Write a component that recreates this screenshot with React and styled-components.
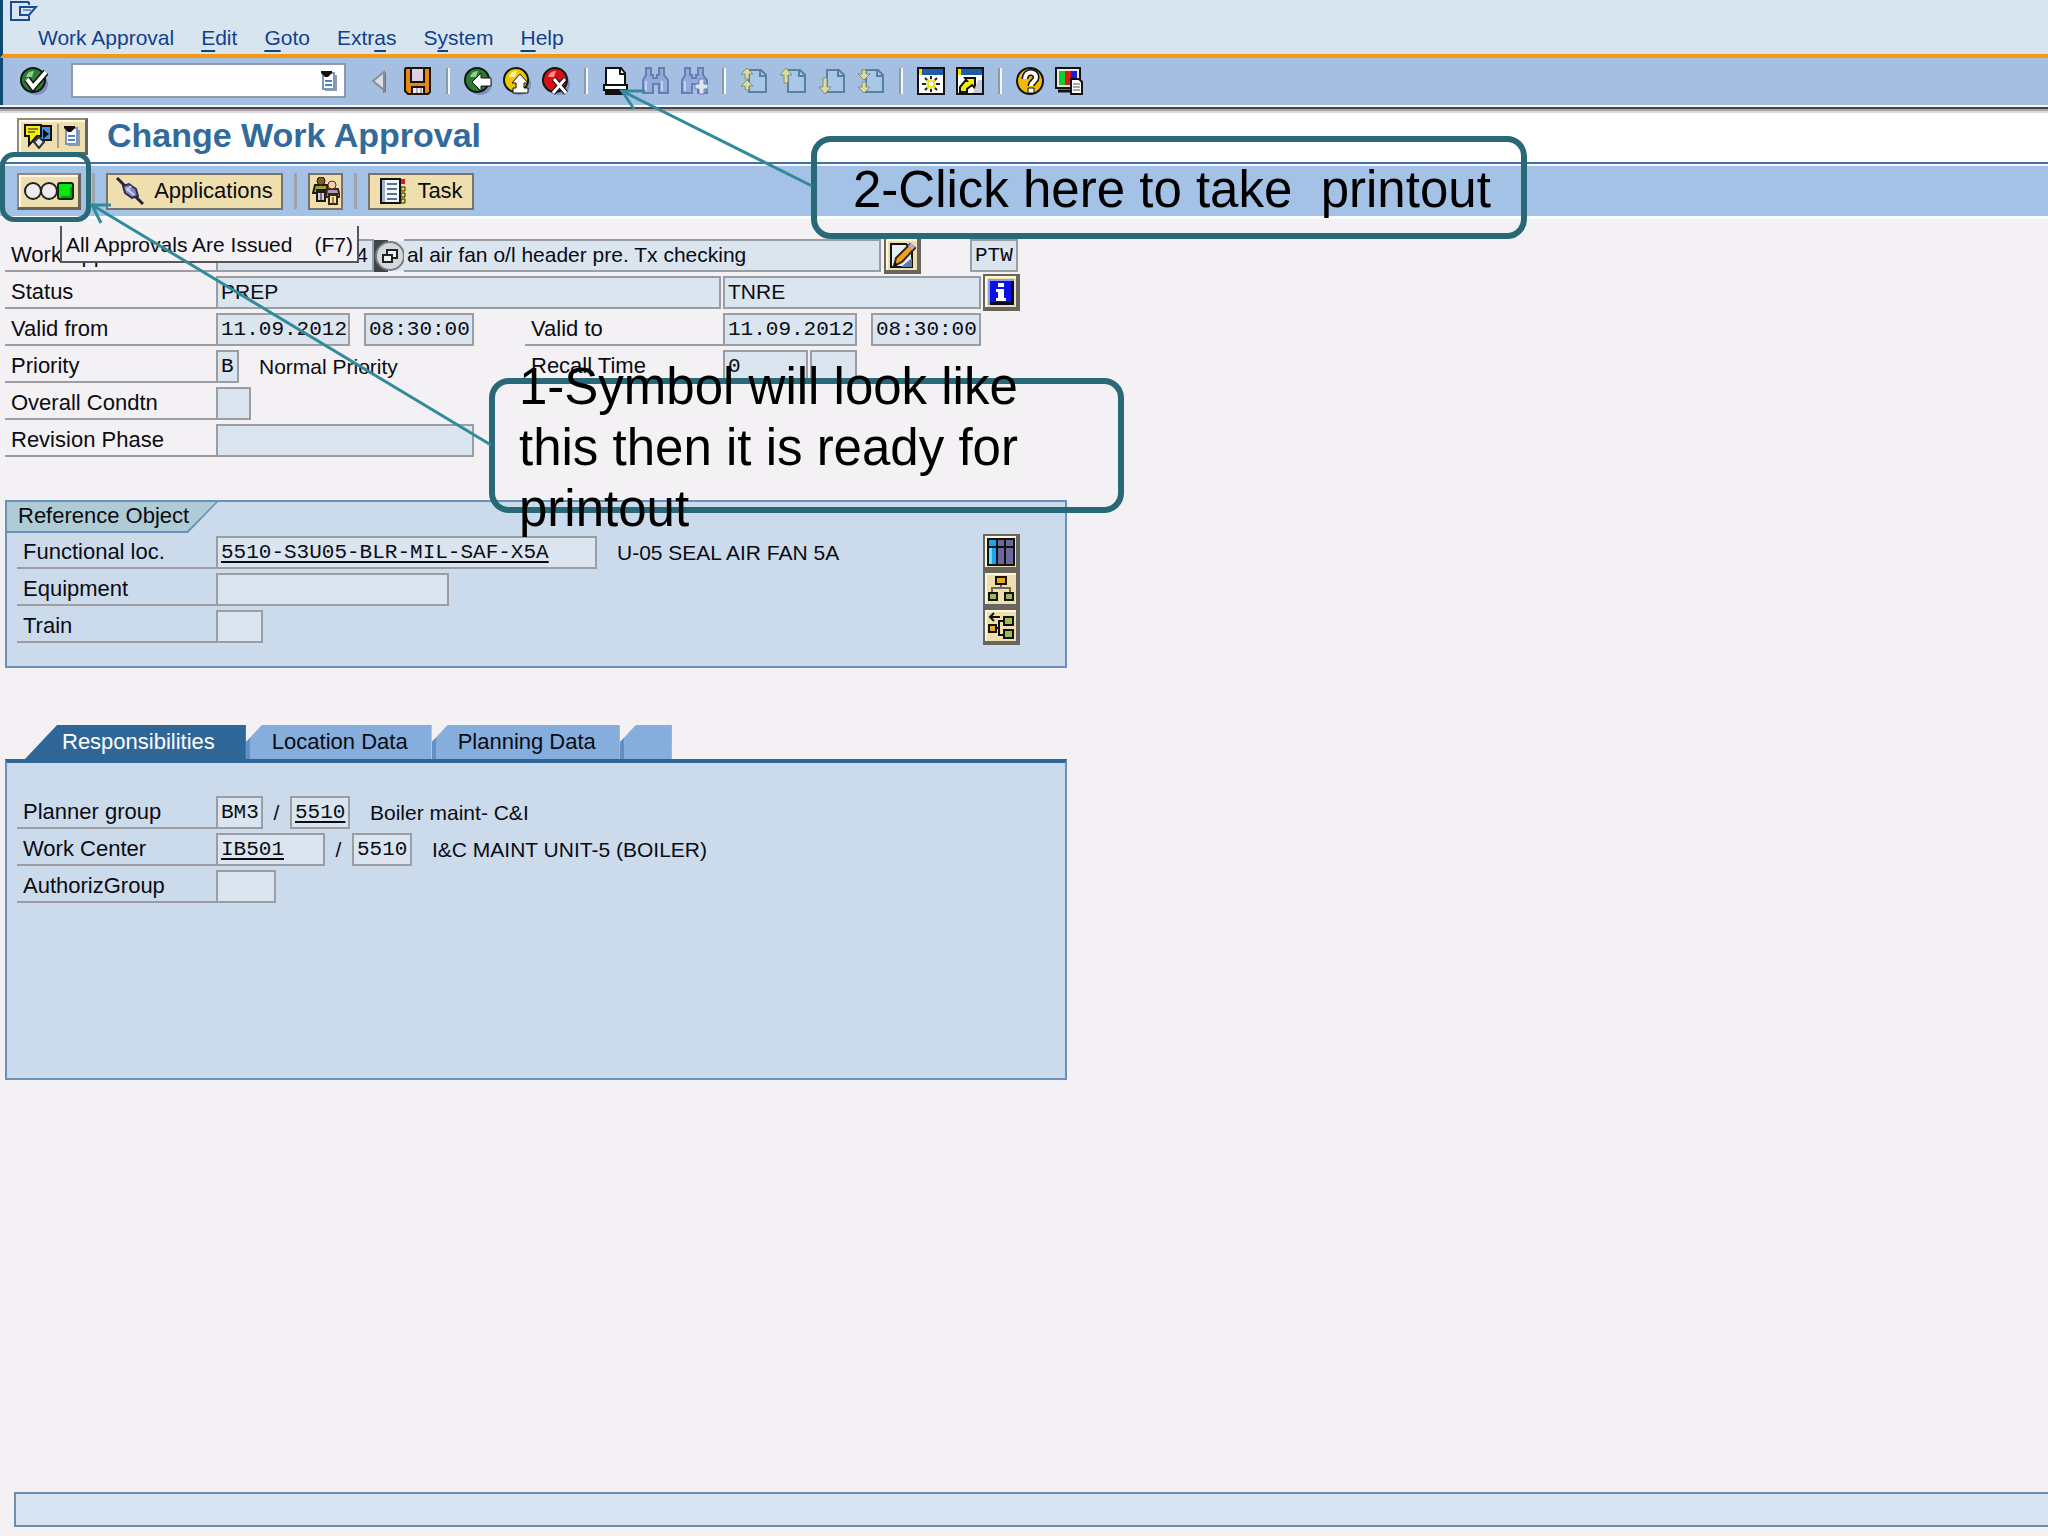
import React, { useState } from "react";
import styled, { createGlobalStyle, css } from "styled-components";

const sans = `"Liberation Sans", Arial, sans-serif`;
const mono = `"Liberation Mono", "Courier New", monospace`;

/* ---------- icons ---------- */

const Svg = ({ w = 28, h = 28, children }) => (
  <svg width={w} height={h} viewBox={`0 0 ${w} ${h}`} aria-hidden="true">
    {children}
  </svg>
);

const Ball = ({ fill, light, children }) => (
  <Svg>
    <ellipse cx="16" cy="17" rx="12" ry="11" fill="#7f8fc0" />
    <circle cx="13" cy="13" r="12" fill={fill} stroke="#0a1a10" strokeWidth="2" />
    <path d="M6 10a8 8 0 0 1 8-6l-2 6z" fill={light} />
    {children}
  </Svg>
);

const CheckIcon = () => (
  <Ball fill="#2c7a34" light="#8fcf8a">
    <path d="M7 12l6 8L26 5" fill="none" stroke="#111" strokeWidth="7" />
    <path d="M7 12l6 8L26 5" fill="none" stroke="#fff" strokeWidth="4" />
  </Ball>
);

const BackIcon = () => (
  <Ball fill="#2c7a34" light="#8fcf8a">
    <path d="M8 15l9-9v5h10v8H17v5z" fill="#fff" stroke="#111" strokeWidth="1" />
  </Ball>
);

const ExitIcon = () => (
  <Ball fill="#f2c500" light="#fff7a0">
    <path d="M17 7l8 9h-4v5h4v5H10v-5h3v-5H9z" fill="#fff" stroke="#111" strokeWidth="1" />
  </Ball>
);

const CancelIcon = () => (
  <Ball fill="#d90f16" light="#ff8f8f">
    <path d="M12 12l12 14M23 12L11 26" stroke="#111" strokeWidth="5" />
    <path d="M12 12l12 14M23 12L11 26" stroke="#fff" strokeWidth="3" />
  </Ball>
);

const ListIcon = () => (
  <Svg w={18} h={22}>
    <path d="M5 5h12v16H5z" fill="#8d9ab8" />
    <path d="M3 3h11v16H3z" fill="#fff" stroke="#7d94bd" strokeWidth="2" />
    <path d="M5 11h7M5 15h7" stroke="#4f7fc4" strokeWidth="2" />
    <path d="M1 1h11v2L8 7H5L1 3z" fill="#111" />
  </Svg>
);

const PrevIcon = () => (
  <Svg>
    <path d="M21 5v20l-3 1V8z" fill="#6f7684" />
    <path d="M19 5v18L8 14z" fill="#dedee2" stroke="#8a8d98" strokeWidth="2" />
  </Svg>
);

const SaveIcon = () => (
  <Svg>
    <path d="M2 1h24v24l-2 2H4l-3-3V2z" fill="#e08a14" stroke="#1b1206" strokeWidth="2" />
    <path d="M7 1h13v14H7z" fill="#dccfe6" stroke="#1b1206" strokeWidth="2" />
    <path d="M8 20h12v7H8z" fill="#f3eef5" stroke="#1b1206" strokeWidth="2" />
    <path d="M13 21v5M17 21v5" stroke="#b8a6bf" strokeWidth="2" />
  </Svg>
);

const PrintIcon = () => (
  <Svg>
    <path d="M4 1h15l4 5v12H4z" fill="#fff" stroke="#111" strokeWidth="2" />
    <path d="M18 1v6h6" fill="none" stroke="#111" strokeWidth="2" />
    <path d="M2 18h23v5H2z" fill="#fff" stroke="#111" strokeWidth="2" />
    <path d="M3 24h21v4H3z" fill="#111" />
  </Svg>
);

const FindIcon = ({ plus }) => (
  <Svg>
    <path
      d="M5 1h5v7h2v3h4V8h2V1h5v7l4 5v13h-9v-9h-6v9H2V13l3-5z"
      fill="#93aadb"
      stroke="#6380ae"
      strokeWidth="2"
    />
    <path d="M5 14v10M21 14v10" stroke="#c2d2f0" strokeWidth="2" />
    {plus && (
      <path
        d="M19 12h5v5h4v5h-4v5h-5v-5h-4v-5h4z"
        fill="#dfe6f2"
        stroke="#6380ae"
        strokeWidth="1"
      />
    )}
  </Svg>
);

const PageIcon = ({ children }) => (
  <Svg>
    <path d="M9 3h12l5 5v17H9z" fill="#a9c6e6" stroke="#57829f" strokeWidth="2" />
    <path d="M20 3v6h6" fill="none" stroke="#57829f" strokeWidth="2" />
    <g fill="#dedc9c" stroke="#7c9078" strokeWidth="1">
      {children}
    </g>
  </Svg>
);

const arrows = {
  first: <path d="M7 1l6 6H9v5H5V7H1zM7 13l6 6H9v4H5v-4H1z" />,
  up: <path d="M7 1l6 7H9v8H5V8H1z" />,
  down: <path d="M7 27l6-7H9v-9H5v9H1z" />,
  last: <path d="M7 13l6-6H9V3H5v4H1zM7 26l6-6H9v-5H5v5H1z" />,
};

const Win = ({ children }) => (
  <Svg>
    <path d="M1 1h26v26H1z" fill="#fff" stroke="#111" strokeWidth="2" />
    <path d="M2 2h24v6H2z" fill="#1d5ca8" />
    <path d="M2 2h3v6H2z" fill="#f3e600" />
    {children}
  </Svg>
);

const SessionIcon = () => (
  <Win>
    <path d="M14 9v16M5 17h18M8 11l12 12M20 11L8 23" stroke="#222" strokeWidth="2" />
    <path d="M14 12v10M9 17h10M10 13l8 8M18 13l-8 8" stroke="#f6ee00" strokeWidth="2" />
    <path d="M12 15h4v4h-4z" fill="#fff" />
  </Win>
);

const ShortcutIcon = () => (
  <Win>
    <path
      d="M4 25v-5l5-6h2l-2-3h10v10l-3-3-5 4v3z"
      fill="#f6ee00"
      stroke="#111"
      strokeWidth="2"
    />
    <path d="M22 13h4v13h-9z" fill="#c5cbdc" />
  </Win>
);

const HelpIcon = () => (
  <Svg>
    <circle cx="14" cy="14" r="13" fill="#f0b90a" stroke="#111" strokeWidth="2" />
    <path d="M5 9a11 11 0 0 1 7-6v7z" fill="#fff59a" />
    <path d="M9 12c0-9 12-8 11-1 0 3-5 4-5 8" fill="none" stroke="#111" strokeWidth="7" />
    <path d="M9 12c0-9 12-8 11-1 0 3-5 4-5 8" fill="none" stroke="#fff" strokeWidth="4" />
    <path d="M12 21h6v5h-6z" fill="#fff" stroke="#111" strokeWidth="1" />
  </Svg>
);

const LayoutIcon = () => (
  <Svg>
    <path d="M1 1h24v20H1z" fill="#e9e9e9" stroke="#111" strokeWidth="2" />
    <path d="M4 4h6v14H4z" fill="#0fce2c" />
    <path d="M10 4h6v14h-6z" fill="#e3121b" />
    <path d="M16 4h6v14h-6z" fill="#1a1ae0" />
    <path d="M3 24h14" stroke="#111" strokeWidth="3" />
    <path d="M16 12h8l3 3v12H16z" fill="#fff" stroke="#111" strokeWidth="2" />
    <path d="M18 17h7M18 20h7M18 23h7" stroke="#555" strokeWidth="1" />
  </Svg>
);

const ExitWindowIcon = () => (
  <Svg w={28} h={20}>
    <path d="M19 1H1v18h18v-4M19 1v3" fill="none" stroke="#1b4b96" strokeWidth="2" />
    <path d="M10 6h16l-7 8h-9z" fill="none" stroke="#1b4b96" strokeWidth="2" />
    <path d="M13 9h8" stroke="#1b4b96" strokeWidth="1" />
  </Svg>
);

const ServicesIcon = () => (
  <Svg w={30} h={26}>
    <path d="M17 3h11v14H17z" fill="#4b8fe0" stroke="#111" strokeWidth="2" />
    <path d="M20 6l6 5-6 5z" fill="#111" />
    <path d="M2 2h16v11h-4l-8 9v-9H2z" fill="#f7ee10" stroke="#111" strokeWidth="2" />
    <path d="M5 6h10M5 9h7" stroke="#111" strokeWidth="1" />
    <path d="M11 19l5-5 5 5-5 6z" fill="#dfe7f2" stroke="#333" strokeWidth="2" />
  </Svg>
);

const LightsIcon = () => (
  <Svg w={50} h={20}>
    <circle cx="9" cy="10" r="8" fill="#ececec" stroke="#222" strokeWidth="2" />
    <circle cx="25" cy="10" r="8" fill="#ececec" stroke="#222" strokeWidth="2" />
    <rect x="34" y="2" width="15" height="16" rx="2" fill="#08e510" stroke="#0c2a0c" strokeWidth="2" />
    <path d="M37 16h10V6" fill="none" stroke="#0a9a12" strokeWidth="2" />
  </Svg>
);

const PlugIcon = () => (
  <Svg>
    <path d="M1 1l26 26" stroke="#23233a" strokeWidth="3" />
    <path d="M7 9l6-2 7 5 2 7-6 2-7-5z" fill="#8287c2" stroke="#2b2b4c" strokeWidth="2" />
    <path d="M10 11l8 7M15 9l-4 5" stroke="#c9cdf0" strokeWidth="2" />
  </Svg>
);

const PeopleIcon = () => (
  <Svg>
    <path d="M5 15h8v9H5z" fill="#c8d2ea" stroke="#22180c" strokeWidth="2" />
    <path d="M9 16v8" stroke="#22180c" />
    <path d="M3 8h12l1 8h-3v-3H5v3H1z" fill="#93a534" stroke="#22180c" strokeWidth="2" />
    <circle cx="9" cy="4" r="4" fill="#8a5a26" stroke="#22180c" />
    <path d="M17 18h8v9h-8z" fill="#f5e6a2" stroke="#3d2712" strokeWidth="2" />
    <path d="M21 20v7" stroke="#3d2712" />
    <path d="M15 12h11l2 8h-3v-3h-8v3h-3z" fill="#a79ac4" stroke="#3d2712" strokeWidth="2" />
    <circle cx="20" cy="8" r="4" fill="#f5cfae" stroke="#5a3210" />
  </Svg>
);

const TaskIcon = () => (
  <Svg>
    <path d="M2 2h19v24H2z" fill="#f4f7fb" stroke="#111" strokeWidth="2" />
    <path d="M3 3h3v22H3z" fill="#9fb3cf" />
    <path d="M8 7h10M8 12h10M8 17h10M8 22h10" stroke="#54718f" strokeWidth="2" />
    <path d="M22 2h4v5h-4z" fill="#e01a1a" />
    <path d="M22 10h4v4h-4zM22 16h4v4h-4zM22 22h4v4h-4z" fill="#f1e21a" stroke="#222" strokeWidth="1" />
  </Svg>
);

const PopupIcon = () => (
  <Svg w={30} h={32}>
    <path d="M0 0h14v32H0z" fill="#3f444a" />
    <path d="M16 1h14v30H16z" fill="#dae5f0" />
    <circle cx="16" cy="16" r="14" fill="#d5d8db" stroke="#777b80" strokeWidth="2" />
    <path d="M13 10h10v8H13z" fill="#eef0f1" stroke="#222" strokeWidth="2" />
    <path d="M9 15h9v7H9z" fill="#eef0f1" stroke="#222" strokeWidth="2" />
  </Svg>
);

const EditIcon = () => (
  <Svg>
    <path d="M3 3h15l6 6v17H3z" fill="#e3eff5" stroke="#111" strokeWidth="2" />
    <path d="M13 26l11-9v9z" fill="#5e79a8" />
    <path d="M6 25l2-8L22 3l5 4-13 14z" fill="#f0a11d" stroke="#3a2408" strokeWidth="2" />
    <path d="M20 5l3-3 4 4-3 3z" fill="#b8a2d8" />
    <path d="M5 26l2-5 3 3z" fill="#111" />
  </Svg>
);

const InfoIcon = () => (
  <Svg>
    <path d="M1 1h26v26H1z" fill="#8f9fdc" />
    <path d="M3 3h24v24H3z" fill="#0a0a2a" />
    <path d="M3 3h21v21H3z" fill="#0b12e6" />
    <path d="M11 5h6v4h-6zM9 11h8v9h2v3H9v-3h2v-6H9z" fill="#fff" />
  </Svg>
);

const TableIcon = () => (
  <Svg>
    <path d="M1 1h26v26H1z" fill="#69699c" />
    <path d="M1 1h9v26H1z" fill="#1aa6ee" />
    <path d="M2 9h3v17H2z" fill="#5fe0ff" />
    <path d="M1 1h26v26H1zM10 1v26M18 1v26M1 9h26" fill="none" stroke="#111" strokeWidth="2" />
  </Svg>
);

const HierarchyIcon = () => (
  <Svg>
    <path d="M14 9v4M5 19v-6h18v6" fill="none" stroke="#6e6a58" strokeWidth="2" />
    <path d="M9 2h10v7H9z" fill="#f0a81c" stroke="#111" strokeWidth="2" />
    <path d="M2 18h8v7H2zM18 18h8v7h-8z" fill="#9cbb4c" stroke="#111" strokeWidth="2" />
  </Svg>
);

const StructureIcon = () => (
  <Svg>
    <path d="M3 5h10M7 1L3 5l4 4" fill="none" stroke="#111" strokeWidth="2" />
    <path d="M9 16h3M18 9h-6v14h6" fill="none" stroke="#111" strokeWidth="2" />
    <path d="M2 13h7v7H2z" fill="#f0a81c" stroke="#111" strokeWidth="2" />
    <path d="M17 5h9v8h-9zM17 18h9v8h-9z" fill="#9cbb4c" stroke="#111" strokeWidth="2" />
  </Svg>
);

/* ---------- data ---------- */

const menus = [
  ["", "", "Work Approval"],
  ["", "E", "dit"],
  ["", "G", "oto"],
  ["Extr", "a", "s"],
  ["S", "y", "stem"],
  ["", "H", "elp"],
];

const toolGroups = [
  [
    ["Back", <BackIcon />],
    ["Exit", <ExitIcon />],
    ["Cancel", <CancelIcon />],
  ],
  [
    ["Print", <PrintIcon />],
    ["Find", <FindIcon />],
    ["Find next", <FindIcon plus />],
  ],
  [
    ["First page", <PageIcon>{arrows.first}</PageIcon>],
    ["Previous page", <PageIcon>{arrows.up}</PageIcon>],
    ["Next page", <PageIcon>{arrows.down}</PageIcon>],
    ["Last page", <PageIcon>{arrows.last}</PageIcon>],
  ],
  [
    ["New session", <SessionIcon />],
    ["Create shortcut", <ShortcutIcon />],
  ],
  [
    ["Help", <HelpIcon />],
    ["Customize layout", <LayoutIcon />],
  ],
];

const tabs = ["Responsibilities", "Location Data", "Planning Data", ""];

const TextField = ({ value = "", label, ...rest }) => {
  const [text, setText] = useState(value);
  return (
    <Field
      value={text}
      aria-label={label}
      onChange={(e) => setText(e.target.value)}
      {...rest}
    />
  );
};

const App = () => {
  const [activeTab, setActiveTab] = useState(0);
  const [command, setCommand] = useState("");

  return (
    <Page>
      <GlobalStyle />

      <MenuArea>
        <ExitWindowIcon />
        <Menu>
          {menus.map(([before, key, after]) => (
            <MenuButton key={after}>
              {before}
              {key && <u>{key}</u>}
              {after}
            </MenuButton>
          ))}
        </Menu>
      </MenuArea>

      <Toolbar>
        <ToolButton aria-label="Enter">
          <CheckIcon />
        </ToolButton>
        <CommandBox>
          <CommandInput
            aria-label="Command"
            value={command}
            onChange={(e) => setCommand(e.target.value)}
          />
          <ToolButton aria-label="Command history">
            <ListIcon />
          </ToolButton>
        </CommandBox>
        <ToolButton aria-label="Collapse command field">
          <PrevIcon />
        </ToolButton>
        <ToolButton aria-label="Save">
          <SaveIcon />
        </ToolButton>
        {toolGroups.map((group, i) => (
          <React.Fragment key={i}>
            <ToolSeparator />
            {group.map(([name, icon]) => (
              <ToolButton key={name} aria-label={name}>
                {icon}
              </ToolButton>
            ))}
          </React.Fragment>
        ))}
      </Toolbar>
      <Ridge />

      <TitleBar>
        <SandButton $w={71} $raised aria-label="Services for object">
          <ServicesIcon />
          <ThinLine />
          <ListIcon />
        </SandButton>
        <Title>Change Work Approval</Title>
      </TitleBar>

      <AppToolbar>
        <SandButton $w={64} $raised aria-label="All Approvals Are Issued">
          <LightsIcon />
        </SandButton>
        <AppSeparator />
        <SandButton $w={177}>
          <PlugIcon />
          <span>Applications</span>
        </SandButton>
        <AppSeparator />
        <SandButton $w={35} aria-label="Partner">
          <PeopleIcon />
        </SandButton>
        <AppSeparator />
        <SandButton $w={106}>
          <TaskIcon />
          <span>Task</span>
        </SandButton>
      </AppToolbar>

      <Main>
        <Header>
          <Row>
            <Label htmlFor="approval">Work Approval</Label>
            <TextField id="approval" value="4" $w={158} $right />
            <PopupIcon />
            <TextField
              label="Description"
              value="al air fan o/l header pre. Tx checking"
              $w={477}
              $flush
            />
            <SquareButton $gap={3} aria-label="Edit text">
              <EditIcon />
            </SquareButton>
            <TextField label="Usage" value="PTW" $w={48} $gap={49} $mono />
          </Row>
          <Row>
            <Label htmlFor="status">Status</Label>
            <TextField id="status" value="PREP" $w={505} />
            <TextField label="User status" value="TNRE" $w={258} $gap={2} />
            <SquareButton $gap={2} aria-label="Status information">
              <InfoIcon />
            </SquareButton>
          </Row>
          <Row>
            <Label htmlFor="from">Valid from</Label>
            <TextField id="from" value="11.09.2012" $w={134} $mono />
            <TextField label="Valid from time" value="08:30:00" $w={110} $gap={14} $mono />
            <Label htmlFor="to" $w={198} $gap={51}>
              Valid to
            </Label>
            <TextField id="to" value="11.09.2012" $w={134} $mono />
            <TextField label="Valid to time" value="08:30:00" $w={110} $gap={14} $mono />
          </Row>
          <Row>
            <Label htmlFor="priority">Priority</Label>
            <TextField id="priority" value="B" $w={23} $mono />
            <Note $w={267}>Normal Priority</Note>
            <Label htmlFor="recall" $w={198}>
              Recall Time
            </Label>
            <TextField id="recall" value="0" $w={85} $mono />
            <TextField label="Recall unit" $w={47} $gap={2} $mono />
          </Row>
          <Row>
            <Label htmlFor="condition">Overall Condtn</Label>
            <TextField id="condition" $w={35} />
          </Row>
          <Row>
            <Label htmlFor="phase">Revision Phase</Label>
            <TextField id="phase" $w={258} />
          </Row>
        </Header>

        <Group>
          <GroupTitle>Reference Object</GroupTitle>
          <GroupBody>
            <Rows>
              <Row>
                <Label htmlFor="floc" $w={199}>
                  Functional loc.
                </Label>
                <TextField
                  id="floc"
                  value="5510-S3U05-BLR-MIL-SAF-X5A"
                  $w={381}
                  $mono
                  $link
                />
                <Note>U-05 SEAL AIR FAN 5A</Note>
              </Row>
              <Row>
                <Label htmlFor="equipment" $w={199}>
                  Equipment
                </Label>
                <TextField id="equipment" $w={233} $mono />
              </Row>
              <Row>
                <Label htmlFor="train" $w={199}>
                  Train
                </Label>
                <TextField id="train" $w={47} $mono />
              </Row>
            </Rows>
            <ButtonStack>
              <SquareButton aria-label="Object data">
                <TableIcon />
              </SquareButton>
              <SquareButton aria-label="Structure list">
                <HierarchyIcon />
              </SquareButton>
              <SquareButton aria-label="Superior object">
                <StructureIcon />
              </SquareButton>
            </ButtonStack>
          </GroupBody>
        </Group>

        <TabStrip role="tablist">
          {tabs.map((tab, i) => (
            <Tab
              key={i}
              role="tab"
              aria-label={tab || "More tabs"}
              aria-selected={i === activeTab}
              $active={i === activeTab}
              onClick={() => setActiveTab(i)}
            >
              {tab}
            </Tab>
          ))}
        </TabStrip>
        <TabPanel role="tabpanel">
          <Row>
            <Label htmlFor="planner" $w={199}>
              Planner group
            </Label>
            <TextField id="planner" value="BM3" $w={47} $mono />
            <Slash>/</Slash>
            <TextField label="Planning plant" value="5510" $w={60} $mono $link />
            <Note>Boiler maint- C&amp;I</Note>
          </Row>
          <Row>
            <Label htmlFor="center" $w={199}>
              Work Center
            </Label>
            <TextField id="center" value="IB501" $w={109} $mono $link />
            <Slash>/</Slash>
            <TextField label="Work center plant" value="5510" $w={60} $mono />
            <Note>I&amp;C MAINT UNIT-5 (BOILER)</Note>
          </Row>
          <Row>
            <Label htmlFor="authgroup" $w={199}>
              AuthorizGroup
            </Label>
            <TextField id="authgroup" $w={60} $mono />
          </Row>
        </TabPanel>
      </Main>

      <StatusBar role="status" />

      <Tooltip role="tooltip">
        <span>All Approvals Are Issued</span>
        <span>(F7)</span>
      </Tooltip>

      <ButtonFrame />
      <StepOne>1-Symbol will look like this then it is ready for printout</StepOne>
      <StepTwo>2-Click here to take&nbsp; printout</StepTwo>
      <Arrows aria-hidden="true">
        <path d="M491 445L92 205M111 205H92l9 18" />
        <path d="M812 186L622 91M645 91h-23l12 18" />
      </Arrows>
    </Page>
  );
};

export default App;

/* ---------- styles ---------- */

const GlobalStyle = createGlobalStyle`
  * {
    box-sizing: border-box;
  }
  body {
    margin: 0;
    background: #f3f1f3;
  }
  button, input {
    font: inherit;
    color: inherit;
  }
  svg {
    display: block;
    flex: none;
  }
`;

const Page = styled.div`
  position: relative;
  display: flex;
  flex-direction: column;
  min-height: 100vh;
  overflow: hidden;
  font-family: ${sans};
  font-size: 21px;
  line-height: 24px;
  color: #0b0b12;
`;

const MenuArea = styled.header`
  height: 58px;
  padding: 1px 0 0 7px;
  background: #d8e5ef;
  border-left: 3px solid #0f4a72;
  border-bottom: 4px solid #f39a14;
`;

const Menu = styled.nav`
  display: flex;
  gap: 27px;
  padding: 5px 0 0 28px;
`;

const MenuButton = styled.button`
  padding: 0;
  border: 0;
  background: none;
  color: #123f8c;
  line-height: 24px;
  u {
    text-underline-offset: 5px;
    text-decoration-thickness: 2px;
  }
`;

const Toolbar = styled.div`
  display: flex;
  align-items: center;
  gap: 11px;
  height: 47px;
  padding: 0 0 2px 17px;
  background: #a5bfe2;
  border-left: 3px solid #0f4a72;
`;

const ToolButton = styled.button`
  flex: none;
  padding: 0;
  border: 0;
  background: none;
`;

const ToolSeparator = styled.span`
  width: 10px;
  height: 26px;
  background: linear-gradient(90deg, #8d9aa8 50%, #f4f6fa 50%) center / 4px 26px no-repeat;
`;

const CommandBox = styled.div`
  display: flex;
  align-items: center;
  width: 275px;
  height: 35px;
  margin: 0 8px 0 12px;
  padding-right: 6px;
  background: #fff;
  border: 2px solid #8f9bab;
`;

const CommandInput = styled.input`
  flex: 1;
  min-width: 0;
  border: 0;
  outline: 0;
  background: none;
`;

const Ridge = styled.div`
  height: 8px;
  background: linear-gradient(
    #f7f8fb 2px,
    #474346 2px 4px,
    #a9a6aa 4px 6px,
    #dcdce0 6px
  );
`;

const TitleBar = styled.div`
  display: flex;
  align-items: center;
  gap: 19px;
  height: 51px;
  padding: 0 0 3px 17px;
  background: #fff;
  border-bottom: 2px solid #44719f;
`;

const Title = styled.h1`
  margin: 0;
  padding-bottom: 2px;
  font-size: 34px;
  line-height: 40px;
  color: #326a9c;
`;

const AppToolbar = styled.div`
  display: flex;
  align-items: center;
  gap: 11px;
  height: 55px;
  padding-left: 17px;
  background: #a4c1e6;
  border-top: 2px solid #f4f6fb;
  border-bottom: 3px solid #fbfcfe;
`;

const AppSeparator = styled.span`
  width: 3px;
  height: 36px;
  background: #a0a4a8;
`;

const sand = css`
  display: flex;
  align-items: center;
  justify-content: center;
  flex: none;
  padding: 0;
  background: #f0dfae;
`;

const SandButton = styled.button`
  ${sand}
  gap: ${({ $raised }) => ($raised ? 4 : 10)}px;
  width: ${({ $w }) => $w}px;
  height: 37px;
  font-size: 22px;
  border: 2px solid #77736a;
  ${({ $raised }) =>
    $raised &&
    css`
      border-color: #8f8a7c #66625c #66625c #8f8a7c;
      border-right-width: 3px;
      border-bottom-width: 3px;
      box-shadow: inset 2px 2px #fff8e2;
    `}
`;

const ThinLine = styled.span`
  width: 2px;
  height: 24px;
  background: #a49f92;
`;

const SquareButton = styled.button`
  ${sand}
  width: 37px;
  height: 37px;
  margin: -2px 0 -2px ${({ $gap = 0 }) => $gap}px;
  border: 2px solid #68655f;
  border-right-width: 4px;
  border-bottom-width: 4px;
  box-shadow: inset 2px 2px #fff8d8;
`;

const Main = styled.main`
  padding: 20px 5px 0;
`;

const Header = styled.section`
  display: flex;
  flex-direction: column;
  gap: 4px;
`;

const Row = styled.div`
  display: flex;
  align-items: center;
  height: 33px;
`;

const Label = styled.label`
  flex: none;
  width: ${({ $w = 211 }) => $w}px;
  height: 33px;
  margin-left: ${({ $gap = 0 }) => $gap}px;
  padding: 4px 0 0 6px;
  border-bottom: 2px solid #9c9ca2;
  font-size: 22px;
  white-space: nowrap;
`;

const Field = styled.input`
  flex: none;
  width: ${({ $w }) => $w}px;
  height: 33px;
  margin-left: ${({ $gap = 0 }) => $gap}px;
  padding: 0 0 1px 3px;
  background: #dae5f0;
  border: 2px solid #9a9da3;
  border-radius: 0;
  outline: 0;
  font-family: ${({ $mono }) => ($mono ? mono : sans)};
  font-size: 21px;
  text-decoration: ${({ $link }) => ($link ? "underline" : "none")};
  text-underline-offset: 3px;
  ${({ $right }) =>
    $right &&
    css`
      padding-right: 4px;
      text-align: right;
    `}
  ${({ $flush }) =>
    $flush &&
    css`
      border-left: 0;
    `}
`;

const Note = styled.span`
  flex: none;
  width: ${({ $w }) => ($w ? `${$w + 19}px` : "auto")};
  padding-left: 20px;
  white-space: nowrap;
`;

const Slash = styled.span`
  width: 27px;
  text-align: center;
`;

const Group = styled.section`
  width: 100%;
  max-width: 1062px;
  margin-top: 43px;
  padding-bottom: 23px;
  background: #ccdbec;
  border: 2px solid #6b91ba;
`;

const GroupTitle = styled.h2`
  position: relative;
  width: 211px;
  height: 31px;
  margin: 0 0 3px;
  padding: 2px 0 0 11px;
  font-size: 22px;
  font-weight: normal;
  background: #6b91ba;
  clip-path: polygon(0 0, 100% 0, 181px 100%, 0 100%);
  z-index: 0;
  &::before {
    content: "";
    position: absolute;
    inset: 0;
    z-index: -1;
    background: #aecbd6;
    clip-path: polygon(0 0, 209px 0, 180px 29px, 0 29px);
  }
`;

const GroupBody = styled.div`
  display: flex;
  justify-content: space-between;
  padding: 0 45px 0 10px;
`;

const Rows = styled.div`
  display: flex;
  flex-direction: column;
  gap: 4px;
`;

const ButtonStack = styled.div`
  display: flex;
  flex-direction: column;
  gap: 4px;
`;

const TabStrip = styled.div`
  display: flex;
  height: 34px;
  margin-top: 57px;
  padding-left: 20px;
`;

const Tab = styled.button`
  min-width: 52px;
  padding: 0 24px 0 26px;
  border: 0;
  font-size: 22px;
  background: linear-gradient(90deg, #5f90c6 4px, #86aedd 4px);
  clip-path: polygon(16px 0, 100% 0, 100% 100%, 0 100%, 0 50%);
  ${({ $active }) =>
    $active &&
    css`
      padding: 0 31px 0 37px;
      color: #fff;
      background: #2f6698;
      clip-path: polygon(32px 0, 100% 0, 100% 100%, 0 100%);
    `}
`;

const TabPanel = styled.section`
  display: flex;
  flex-direction: column;
  gap: 4px;
  width: 100%;
  max-width: 1062px;
  min-height: 321px;
  padding: 33px 10px;
  background: #ccdbec;
  border: 2px solid #6b91ba;
  border-top: 4px solid #2f6698;
`;

const StatusBar = styled.footer`
  height: 35px;
  margin: auto 0 9px 14px;
  background: #d8e4f1;
  border: 2px solid #6d8dac;
  border-right: 0;
`;

const Tooltip = styled.div`
  position: absolute;
  top: 226px;
  left: 60px;
  display: flex;
  gap: 22px;
  height: 37px;
  padding: 7px 4px 0;
  background: #f4f2f4;
  border: solid #55555a;
  border-width: 0 2px 2px;
  white-space: nowrap;
`;

const ButtonFrame = styled.div`
  position: absolute;
  top: 152px;
  left: 0;
  width: 91px;
  height: 70px;
  border: 5px solid #286877;
  border-radius: 14px;
  pointer-events: none;
`;

const Callout = styled.div`
  position: absolute;
  display: flex;
  align-items: center;
  border: 6px solid #286877;
  border-radius: 20px;
  font-size: 51px;
  line-height: 61px;
  color: #000;
`;

const StepOne = styled(Callout)`
  top: 378px;
  left: 489px;
  width: 635px;
  height: 135px;
  padding: 4px 24px 0;
`;

const StepTwo = styled(Callout)`
  top: 136px;
  left: 811px;
  width: 716px;
  height: 103px;
  padding: 4px 0 0 36px;
  white-space: nowrap;
`;

const Arrows = styled.svg`
  position: absolute;
  top: 0;
  left: 0;
  width: 100%;
  height: 100%;
  fill: none;
  stroke: #338a9b;
  stroke-width: 3;
  pointer-events: none;
`;
